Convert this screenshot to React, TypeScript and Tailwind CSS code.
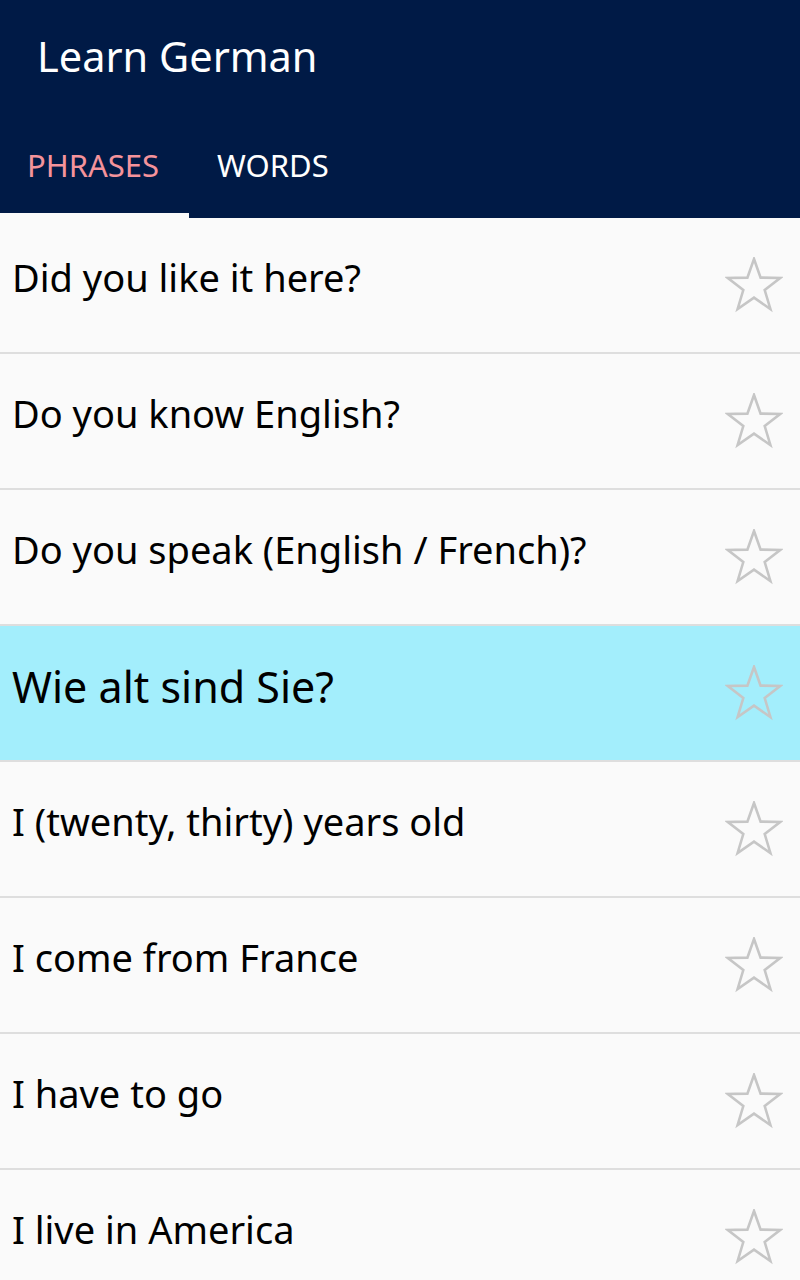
import { useState } from 'react'

const phrases = [
  'Did you like it here?',
  'Do you know English?',
  'Do you speak (English / French)?',
  'Wie alt sind Sie?',
  'I (twenty, thirty) years old',
  'I come from France',
  'I have to go',
  'I live in America',
]

function StarIcon() {
  return (
    <svg width="58" height="56" viewBox="0 0 58 56" fill="none">
      <path
        d="M29 2 L35.6 20.6 L55.5 20.9 L39.7 33 L45.4 52 L29 40.7 L12.6 52 L18.3 33 L2.5 20.9 L22.4 20.6 Z"
        stroke="#c6c6c6"
        strokeWidth="2.6"
        strokeLinejoin="miter"
      />
    </svg>
  )
}

export default function App() {
  const [tab, setTab] = useState('PHRASES')
  const active = 3

  return (
    <div className="w-[800px] h-[1280px] overflow-hidden bg-[#fafafa]" style={{ fontFamily: '"Noto Sans", "Open Sans", sans-serif' }}>
      <div className="h-[218px] bg-[#001a46] flex flex-col">
        <div className="h-[112px] pl-[37px] pt-[31px]">
          <h1 className="text-[41.5px] leading-[50px] text-white">Learn German</h1>
        </div>
        <div className="flex-1 flex">
          {['PHRASES', 'WORDS'].map((t) => (
            <button
              key={t}
              onClick={() => setTab(t)}
              className={
                t === 'PHRASES'
                  ? 'w-[189px] flex flex-col justify-between cursor-pointer'
                  : 'w-[166px] flex flex-col justify-between cursor-pointer'
              }
            >
              <span
                className={
                  tab === t
                    ? 'block text-[31px] leading-[40px] pt-[33px] pl-[27px] text-left text-[#f4939b]'
                    : 'block text-[31px] leading-[40px] pt-[33px] pl-[28px] text-left text-white'
                }
              >
                {t}
              </span>
              <span className={tab === t ? 'block h-[5px] bg-[#fafafa]' : 'block h-[5px]'} />
            </button>
          ))}
        </div>
      </div>

      <div>
        {phrases.map((p, i) => (
          <div
            key={p}
            className={
              i === active
                ? 'h-[136px] flex items-center justify-between bg-[#a3eefc] border-b-2 border-[#dedede]'
                : 'h-[136px] flex items-center justify-between border-b-2 border-[#dedede]'
            }
          >
            <span
              className={
                i === active
                  ? 'pl-[12px] pb-[12px] text-[43px] text-black'
                  : 'pl-[12px] pb-[16px] text-[38px] text-black'
              }
            >
              {p}
            </span>
            <div className="pr-[17px]">
              <StarIcon />
            </div>
          </div>
        ))}
      </div>
    </div>
  )
}
